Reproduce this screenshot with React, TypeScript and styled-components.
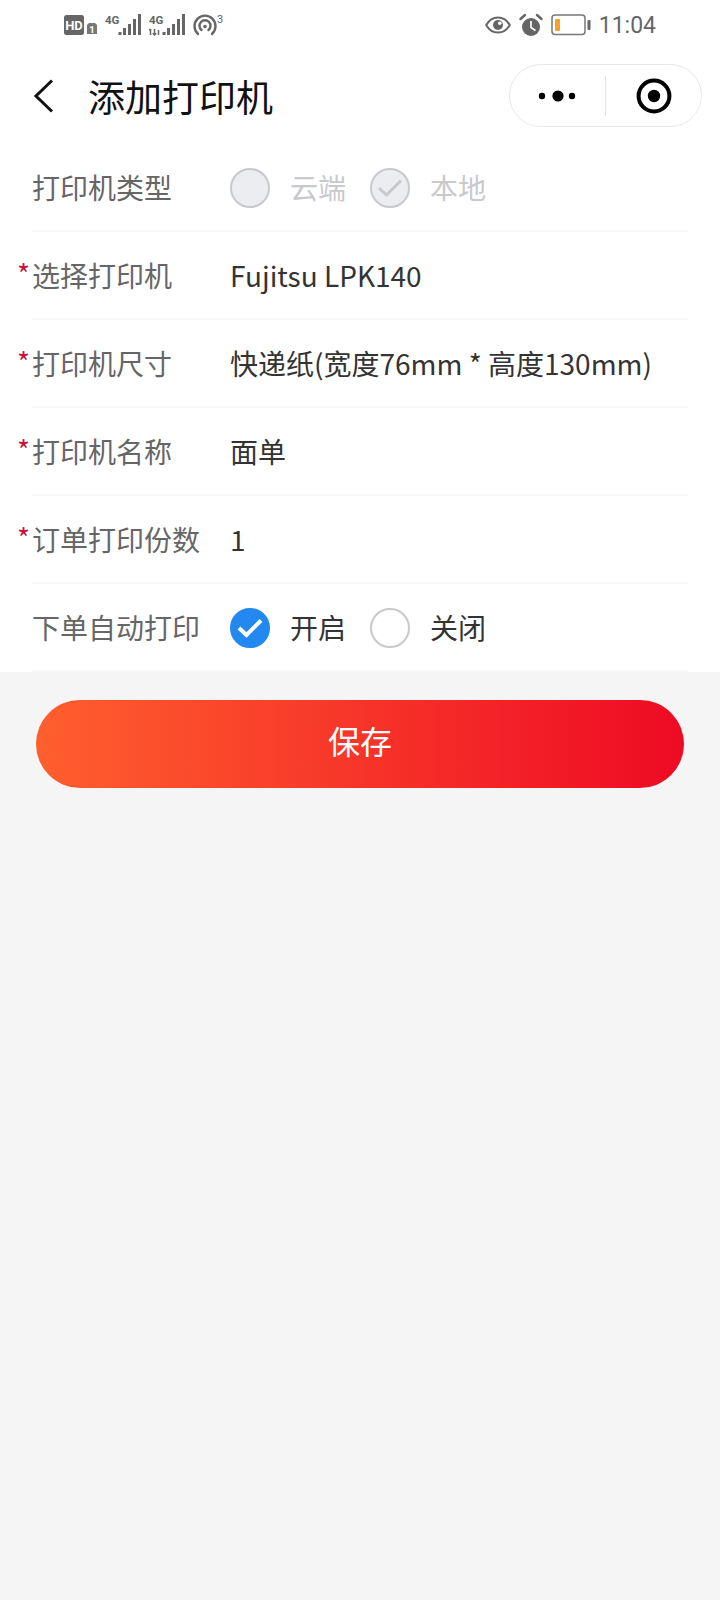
import styled, { createGlobalStyle } from "styled-components";

const GlobalStyle = createGlobalStyle`
    html, body {
        margin: 0;
        padding: 0;
        background: #f5f5f5;
    }
    * {
        box-sizing: border-box;
    }
`;

const FONT = `"Noto Sans CJK SC", "Noto Sans", sans-serif`;

const SignalIcon = ({ withRate }: { withRate?: boolean }) => (
    <svg width="36" height="24" viewBox="0 0 36 24">
        <text x="0" y="11" fontFamily="Roboto, sans-serif" fontSize="11.5" fontWeight="700" fill="#666">
            4G
        </text>
        {withRate && <path d="M1.5 22v-6M1.5 16l-1.4 1.4M5.5 16v6M3.8 20.2l1.7 1.8 1.7-1.8M9.5 17v5" stroke="#666" strokeWidth="1.5" fill="none" />}
        <rect x="13.5" y="19" width="3" height="3" fill="#666" />
        <rect x="18" y="15" width="3" height="7" fill="#666" />
        <rect x="23" y="11" width="3" height="11" fill="#666" />
        <rect x="28" y="6" width="3" height="16" fill="#666" />
        <rect x="33" y="1" width="3" height="21" fill="#666" />
    </svg>
);

const HdIcon = () => (
    <svg width="33" height="20" viewBox="0 0 33 20">
        <rect x="0" y="0" width="20" height="20" rx="2.5" fill="#666" />
        <text x="10" y="14.5" textAnchor="middle" fontFamily="Roboto, sans-serif" fontSize="13" fontWeight="700" fill="#fff">
            HD
        </text>
        <path d="M23 10l2-2h6l2 2V19h-10z" fill="#777" />
        <text x="28" y="17.5" textAnchor="middle" fontFamily="Roboto, sans-serif" fontSize="9.5" fontWeight="700" fill="#fff">
            1
        </text>
    </svg>
);

const HotspotIcon = () => (
    <svg width="36" height="26" viewBox="0 0 36 26">
        <g fill="none" stroke="#666" strokeWidth="2.4" strokeLinecap="round">
            <path d="M5 22a10.5 10.5 0 1 1 14 0" />
            <path d="M8.5 18a5.5 5.5 0 1 1 7 0" />
        </g>
        <circle cx="12" cy="14.5" r="1.8" fill="#666" />
        <text x="24" y="11" fontFamily="Roboto, sans-serif" fontSize="11" fill="#666">
            3
        </text>
    </svg>
);

const EyeIcon = () => (
    <svg width="26" height="20" viewBox="0 0 26 20">
        <path d="M1.2 10C4 5 8 2.4 13 2.4S22 5 24.8 10C22 15 18 17.6 13 17.6S4 15 1.2 10z" fill="none" stroke="#666" strokeWidth="2" />
        <circle cx="13" cy="10" r="5" fill="#666" />
        <circle cx="14.8" cy="8.2" r="1.8" fill="#fff" />
    </svg>
);

const AlarmIcon = () => (
    <svg width="24" height="24" viewBox="0 0 24 24">
        <circle cx="12" cy="14" r="9" fill="#666" />
        <path d="M12 8v6.5l4.5 3" fill="none" stroke="#fff" strokeWidth="1.7" />
        <path d="M1.5 6L6 2M22.5 6L18 2" stroke="#666" strokeWidth="2.4" strokeLinecap="round" />
    </svg>
);

const BatteryIcon = () => (
    <svg width="40" height="22" viewBox="0 0 40 22">
        <rect x="1" y="1" width="33" height="19.5" rx="3" fill="#fff" stroke="#777" strokeWidth="1.5" />
        <rect x="4" y="5" width="5" height="12" rx="1" fill="#f7a12c" />
        <rect x="36.5" y="6" width="3" height="10" rx="1" fill="#666" />
    </svg>
);

const BackIcon = () => (
    <svg width="22" height="34" viewBox="0 0 22 34">
        <path d="M19 1.5L3 17l16 15.5" fill="none" stroke="#111" strokeWidth="3" />
    </svg>
);

const MoreIcon = () => (
    <svg width="40" height="12" viewBox="0 0 40 12">
        <circle cx="4" cy="6" r="3.2" fill="#000" />
        <circle cx="20" cy="6" r="5.6" fill="#000" />
        <circle cx="34" cy="6" r="3.2" fill="#000" />
    </svg>
);

const CloseIcon = () => (
    <svg width="36" height="36" viewBox="0 0 36 36">
        <circle cx="18" cy="18" r="15.4" fill="none" stroke="#000" strokeWidth="4" />
        <circle cx="18" cy="18" r="6.2" fill="#000" />
    </svg>
);

const CheckMark = ({ disabled }: { disabled?: boolean }) => (
    <svg width="26" height="20" viewBox="0 0 26 20">
        <path d="M2 10l7.5 7L24 2.5" fill="none" stroke={disabled ? "#c8c9cc" : "#fff"} strokeWidth={disabled ? 3 : 4} />
    </svg>
);

type RadioProps = {
    label: string;
    checked?: boolean;
    disabled?: boolean;
};

const Radio = ({ label, checked, disabled }: RadioProps) => (
    <RadioItem>
        <RadioCircle $checked={checked} $disabled={disabled}>
            {checked && <CheckMark disabled={disabled} />}
        </RadioCircle>
        <RadioLabel $disabled={disabled}>{label}</RadioLabel>
    </RadioItem>
);

export default function App() {
    return (
        <Page>
            <GlobalStyle />
            <Panel>
                <StatusBar>
                    <StatusGroup>
                        <HdIcon />
                        <SignalIcon />
                        <SignalIcon withRate />
                        <HotspotIcon />
                    </StatusGroup>
                    <StatusGroup>
                        <EyeIcon />
                        <AlarmIcon />
                        <BatteryIcon />
                        <Time>11:04</Time>
                    </StatusGroup>
                </StatusBar>
                <NavBar>
                    <BackButton>
                        <BackIcon />
                    </BackButton>
                    <NavTitle>添加打印机</NavTitle>
                    <Capsule>
                        <CapsuleCell>
                            <MoreIcon />
                        </CapsuleCell>
                        <CapsuleDivider />
                        <CapsuleCell>
                            <CloseIcon />
                        </CapsuleCell>
                    </Capsule>
                </NavBar>
                <Form>
                    <Row>
                        <Label>打印机类型</Label>
                        <RadioGroup>
                            <Radio label="云端" disabled />
                            <Radio label="本地" disabled checked />
                        </RadioGroup>
                    </Row>
                    <Row>
                        <Label $required>选择打印机</Label>
                        <Value>Fujitsu LPK140</Value>
                    </Row>
                    <Row>
                        <Label $required>打印机尺寸</Label>
                        <Value>快递纸(宽度76mm * 高度130mm)</Value>
                    </Row>
                    <Row>
                        <Label $required>打印机名称</Label>
                        <Value>面单</Value>
                    </Row>
                    <Row>
                        <Label $required>订单打印份数</Label>
                        <Value>1</Value>
                    </Row>
                    <Row>
                        <Label>下单自动打印</Label>
                        <RadioGroup>
                            <Radio label="开启" checked />
                            <Radio label="关闭" />
                        </RadioGroup>
                    </Row>
                </Form>
            </Panel>
            <SaveButton>保存</SaveButton>
        </Page>
    );
}

const Page = styled.div`
    width: 720px;
    height: 1600px;
    background: #f5f5f5;
    font-family: ${FONT};
    overflow: hidden;
`;

const Panel = styled.div`
    background: #fff;
`;

const StatusBar = styled.div`
    height: 50px;
    padding: 0 64px;
    display: flex;
    align-items: center;
    justify-content: space-between;
`;

const StatusGroup = styled.div`
    display: flex;
    align-items: center;
    gap: 8px;
`;

const Time = styled.span`
    font-family: Roboto, sans-serif;
    font-size: 23px;
    color: #666;
`;

const NavBar = styled.div`
    height: 94px;
    padding: 0 18px 0 33px;
    display: flex;
    align-items: center;
`;

const BackButton = styled.div`
    display: flex;
    width: 55px;
    margin-bottom: 2px;
`;

const NavTitle = styled.div`
    flex: 1;
    font-size: 37px;
    line-height: 50px;
    color: #111;
    padding-bottom: 2px;
`;

const Capsule = styled.div`
    width: 193px;
    height: 63px;
    margin-bottom: 3px;
    border: 1px solid #e8e8e8;
    border-radius: 32px;
    display: flex;
    align-items: center;
`;

const CapsuleCell = styled.div`
    flex: 1;
    display: flex;
    align-items: center;
    justify-content: center;
`;

const CapsuleDivider = styled.div`
    width: 1px;
    height: 40px;
    background: #e4e4e4;
`;

const Form = styled.div`
    padding: 0 32px;
`;

const Row = styled.div`
    height: 88px;
    display: flex;
    align-items: center;
    border-bottom: 2px solid #f8f8f8;
`;

const Label = styled.div<{ $required?: boolean }>`
    position: relative;
    width: 198px;
    font-size: 28px;
    line-height: 40px;
    color: #666;
    &::before {
        content: ${({ $required }) => ($required ? '"*"' : "none")};
        position: absolute;
        left: -15px;
        top: -2px;
        font-size: 28px;
        color: #c8143c;
    }
`;

const Value = styled.div`
    font-size: 28px;
    line-height: 40px;
    color: #333;
`;

const RadioGroup = styled.div`
    display: flex;
    align-items: center;
    gap: 24px;
`;

const RadioItem = styled.div`
    display: flex;
    align-items: center;
    gap: 20px;
`;

const RadioCircle = styled.div<{ $checked?: boolean; $disabled?: boolean }>`
    width: 40px;
    height: 40px;
    margin-top: 2px;
    border-radius: 50%;
    display: flex;
    align-items: center;
    justify-content: center;
    border: 2px solid ${({ $checked, $disabled }) => ($disabled || !$checked ? "#c8c9cc" : "#2389f0")};
    background: ${({ $checked, $disabled }) => ($disabled ? "#ebedf0" : $checked ? "#2389f0" : "#fff")};
`;

const RadioLabel = styled.span<{ $disabled?: boolean }>`
    font-size: 28px;
    line-height: 40px;
    color: ${({ $disabled }) => ($disabled ? "#c8c9cc" : "#333")};
`;

const SaveButton = styled.div`
    margin: 28px 36px 0;
    height: 88px;
    padding-bottom: 8px;
    border-radius: 44px;
    background: linear-gradient(90deg, #ff5f2e, #ee0a24);
    color: #fff;
    font-size: 32px;
    display: flex;
    align-items: center;
    justify-content: center;
`;
